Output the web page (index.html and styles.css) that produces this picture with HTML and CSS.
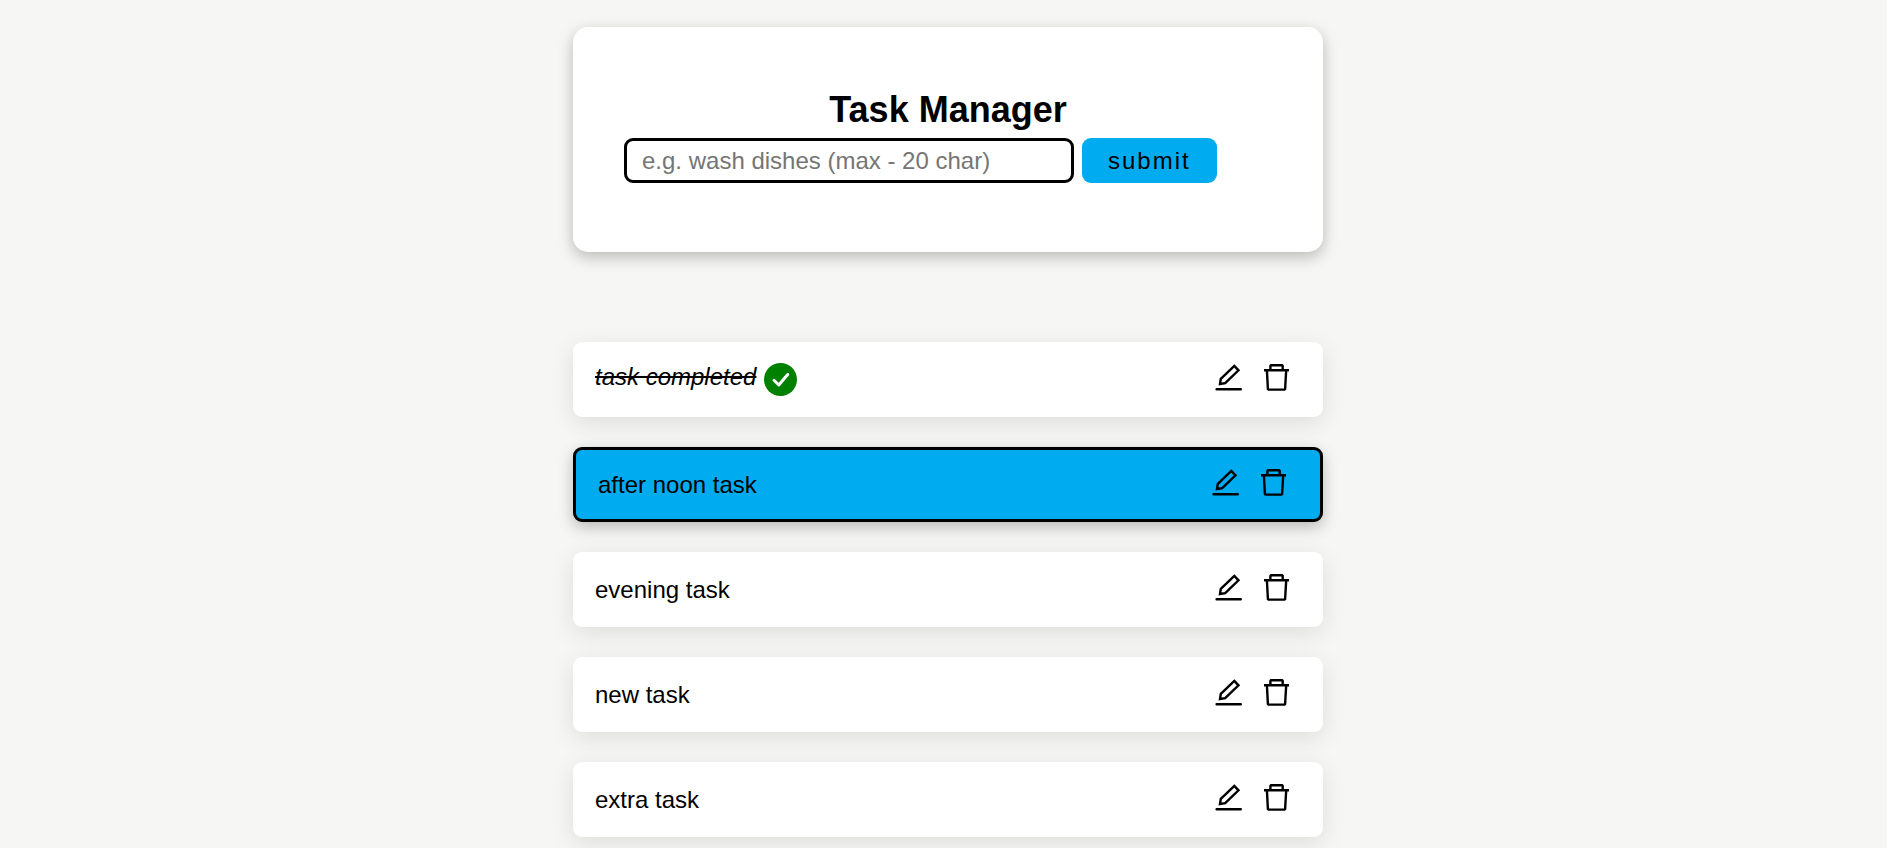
FILE: index.html
```html
<!DOCTYPE html>
<html lang="en">
<head>
<meta charset="utf-8">
<title>Task Manager</title>
<link rel="stylesheet" href="styles.css">
</head>
<body>
<svg class="sprite" aria-hidden="true">
  <symbol id="edit" viewBox="0 0 30 30"><path d="M2.6 26.3H26.8M6 21L6.8 15.9 20.3 2.9 24.5 7.3 11.2 20.1Z" fill="none" stroke="currentColor" stroke-width="2.4" stroke-linecap="round"/></symbol>
  <symbol id="trash" viewBox="0 0 30 30"><path d="M2 7.3H27M8.4 7.3V2.8L9 2.2H20.1L20.7 2.8V7.3M4.9 7.3L5.9 26.1 6.5 26.6H22.5L23.1 26.1 24.2 7.3" fill="none" stroke="currentColor" stroke-width="2.4" stroke-linejoin="round"/></symbol>
</svg>
<main class="page">
  <section class="panel">
    <h1 class="title">Task Manager</h1>
    <form class="task-form">
      <input class="task-input" type="text" maxlength="20" aria-label="New task" placeholder="e.g. wash dishes (max - 20 char)">
      <button class="submit" type="submit">submit</button>
    </form>
  </section>
  <ul class="tasks">
    <li class="task">
      <div class="label"><s class="done">task completed</s>
        <svg class="check" viewBox="0 0 33 33" role="img" aria-label="Completed"><circle cx="16.5" cy="16.5" r="16.5" fill="#008000"/><path d="M10 17.3L14.8 22 23.7 11.5" fill="none" stroke="#fff" stroke-width="3" stroke-linecap="round" stroke-linejoin="round"/></svg>
      </div>
      <div class="actions"><button class="icon" type="button" aria-label="Edit"><svg><use href="#edit"/></svg></button><button class="icon" type="button" aria-label="Delete"><svg><use href="#trash"/></svg></button></div>
    </li>
    <li class="task active">
      <span class="label">after noon task</span>
      <div class="actions"><button class="icon" type="button" aria-label="Edit"><svg><use href="#edit"/></svg></button><button class="icon" type="button" aria-label="Delete"><svg><use href="#trash"/></svg></button></div>
    </li>
    <li class="task">
      <span class="label">evening task</span>
      <div class="actions"><button class="icon" type="button" aria-label="Edit"><svg><use href="#edit"/></svg></button><button class="icon" type="button" aria-label="Delete"><svg><use href="#trash"/></svg></button></div>
    </li>
    <li class="task">
      <span class="label">new task</span>
      <div class="actions"><button class="icon" type="button" aria-label="Edit"><svg><use href="#edit"/></svg></button><button class="icon" type="button" aria-label="Delete"><svg><use href="#trash"/></svg></button></div>
    </li>
    <li class="task">
      <span class="label">extra task</span>
      <div class="actions"><button class="icon" type="button" aria-label="Edit"><svg><use href="#edit"/></svg></button><button class="icon" type="button" aria-label="Delete"><svg><use href="#trash"/></svg></button></div>
    </li>
  </ul>
</main>
</body>
</html>
```
FILE: styles.css
```css
* {
  box-sizing: border-box;
}

body {
  margin: 0;
  padding-left: 9px;
  background: #f6f6f5;
  color: #000;
  font-family: "Liberation Sans", Arial, sans-serif;
  font-size: 24px;
}

.sprite {
  display: none;
}

.page {
  max-width: 750px;
  min-height: 100vh;
  margin: 0 auto;
  padding-top: 27px;
}

.panel {
  padding: 62px 51px 69px;
  border-radius: 15px;
  background: #fff;
  box-shadow: 0 5px 15px rgba(0, 0, 0, 0.25);
}

.title {
  margin: 0 0 8px;
  font-size: 36px;
  line-height: 41px;
  text-align: center;
}

.task-form {
  display: flex;
  gap: 8px;
}

.task-input {
  flex: 0 1 450px;
  min-width: 0;
  height: 45px;
  padding: 0 15px;
  border: 3px solid #000;
  border-radius: 9px;
  background: #fff;
  font: inherit;
  outline: none;
}

.task-input::placeholder {
  color: #757575;
}

.submit {
  height: 45px;
  padding: 0 26px;
  border: 0;
  border-radius: 9px;
  background: #00abf0;
  color: #000;
  font: inherit;
  letter-spacing: 2px;
}

.tasks {
  display: grid;
  gap: 30px;
  margin: 90px 0 0;
  padding: 0;
  list-style: none;
}

.task {
  display: flex;
  align-items: center;
  justify-content: space-between;
  min-height: 75px;
  padding: 0 31px 0 22px;
  border-radius: 9px;
  background: #fff;
  box-shadow: 0 6px 24px rgba(0, 0, 0, 0.1);
}

.active {
  border: 3px solid #000;
  background: #00abf0;
  box-shadow: 0 5px 15px rgba(0, 0, 0, 0.25);
}

.label {
  display: flex;
  align-items: center;
  gap: 8px;
}

.done {
  padding-bottom: 6px;
  font-style: italic;
}

.check {
  width: 33px;
  height: 33px;
}

.actions {
  display: flex;
  gap: 18px;
  padding-bottom: 3px;
}

.icon {
  padding: 0;
  border: 0;
  background: none;
  color: inherit;
}

.icon svg {
  display: block;
  width: 30px;
  height: 30px;
}
```
